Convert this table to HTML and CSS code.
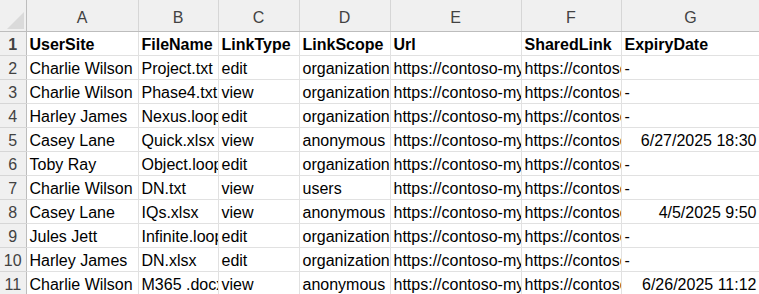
FILE: index.html
```html
<!DOCTYPE html>
<html lang="en">
<head>
    <meta charset="UTF-8">
    <title>SharedLinks.xlsx</title>
    <link rel="stylesheet" href="styles.css">
</head>
<body>
    <table class="sheet">
        <colgroup>
            <col class="c-num">
            <col class="c-a">
            <col class="c-b">
            <col class="c-c">
            <col class="c-d">
            <col class="c-e">
            <col class="c-f">
            <col class="c-g">
        </colgroup>
        <thead>
            <tr>
                <th class="corner"><span class="tri"></span></th>
                <th>A</th>
                <th>B</th>
                <th>C</th>
                <th>D</th>
                <th>E</th>
                <th>F</th>
                <th>G</th>
            </tr>
        </thead>
        <tbody>
            <tr class="head">
                <td class="num">1</td>
                <td>UserSite</td>
                <td>FileName</td>
                <td>LinkType</td>
                <td>LinkScope</td>
                <td>Url</td>
                <td>SharedLink</td>
                <td>ExpiryDate</td>
            </tr>
            <tr>
                <td class="num">2</td>
                <td>Charlie Wilson</td>
                <td>Project.txt</td>
                <td>edit</td>
                <td>organization</td>
                <td>https://contoso-my.sharepoint.com/personal/charlie</td>
                <td>https://contoso.sharepoint.com/:t:/g/personal</td>
                <td>-</td>
            </tr>
            <tr>
                <td class="num">3</td>
                <td>Charlie Wilson</td>
                <td>Phase4.txt</td>
                <td>view</td>
                <td>organization</td>
                <td>https://contoso-my.sharepoint.com/personal/charlie</td>
                <td>https://contoso.sharepoint.com/:t:/g/personal</td>
                <td>-</td>
            </tr>
            <tr>
                <td class="num">4</td>
                <td>Harley James</td>
                <td>Nexus.loop</td>
                <td>edit</td>
                <td>organization</td>
                <td>https://contoso-my.sharepoint.com/personal/harley</td>
                <td>https://contoso.sharepoint.com/:fl:/g/personal</td>
                <td>-</td>
            </tr>
            <tr>
                <td class="num">5</td>
                <td>Casey Lane</td>
                <td>Quick.xlsx</td>
                <td>view</td>
                <td>anonymous</td>
                <td>https://contoso-my.sharepoint.com/personal/casey</td>
                <td>https://contoso.sharepoint.com/:x:/g/personal</td>
                <td class="date">6/27/2025 18:30</td>
            </tr>
            <tr>
                <td class="num">6</td>
                <td>Toby Ray</td>
                <td>Object.loop</td>
                <td>edit</td>
                <td>organization</td>
                <td>https://contoso-my.sharepoint.com/personal/toby</td>
                <td>https://contoso.sharepoint.com/:fl:/g/personal</td>
                <td>-</td>
            </tr>
            <tr>
                <td class="num">7</td>
                <td>Charlie Wilson</td>
                <td>DN.txt</td>
                <td>view</td>
                <td>users</td>
                <td>https://contoso-my.sharepoint.com/personal/charlie</td>
                <td>https://contoso.sharepoint.com/:t:/g/personal</td>
                <td>-</td>
            </tr>
            <tr>
                <td class="num">8</td>
                <td>Casey Lane</td>
                <td>IQs.xlsx</td>
                <td>view</td>
                <td>anonymous</td>
                <td>https://contoso-my.sharepoint.com/personal/casey</td>
                <td>https://contoso.sharepoint.com/:x:/g/personal</td>
                <td class="date">4/5/2025 9:50</td>
            </tr>
            <tr>
                <td class="num">9</td>
                <td>Jules Jett</td>
                <td>Infinite.loop</td>
                <td>edit</td>
                <td>organization</td>
                <td>https://contoso-my.sharepoint.com/personal/jules</td>
                <td>https://contoso.sharepoint.com/:fl:/g/personal</td>
                <td>-</td>
            </tr>
            <tr>
                <td class="num">10</td>
                <td>Harley James</td>
                <td>DN.xlsx</td>
                <td>edit</td>
                <td>organization</td>
                <td>https://contoso-my.sharepoint.com/personal/harley</td>
                <td>https://contoso.sharepoint.com/:x:/g/personal</td>
                <td>-</td>
            </tr>
            <tr>
                <td class="num">11</td>
                <td>Charlie Wilson</td>
                <td>M365 .docx</td>
                <td>view</td>
                <td>anonymous</td>
                <td>https://contoso-my.sharepoint.com/personal/charlie</td>
                <td>https://contoso.sharepoint.com/:w:/g/personal</td>
                <td class="date">6/26/2025 11:12</td>
            </tr>
        </tbody>
    </table>
</body>
</html>
```

FILE: styles.css
```css
body {
    margin: 0;
    background: #ffffff;
    overflow: hidden;
    font-family: 'Liberation Sans', Arial, sans-serif;
    font-size: 16px;
    line-height: 18px;
    color: #000000;
}
.sheet {
    border-collapse: collapse;
    table-layout: fixed;
    width: 760px;
}
.c-num { width: 26px; }
.c-a { width: 112px; }
.c-b { width: 80px; }
.c-c { width: 81px; }
.c-d { width: 91px; }
.c-e { width: 131px; }
.c-f { width: 100px; }
.c-g { width: 139px; }
.sheet thead tr {
    height: 31px;
}
.sheet tbody tr {
    height: 24px;
}
.sheet th {
    padding: 0 0 4px;
    background: #f0f0f0;
    color: #424242;
    font-weight: normal;
    vertical-align: bottom;
    border-right: 1px solid #d6d6d6;
    border-bottom: 1px solid #bdbdbd;
}
.sheet th.corner {
    position: relative;
    border-right: 1px solid #bdbdbd;
}
.tri {
    position: absolute;
    right: 2px;
    bottom: 2px;
    width: 0;
    height: 0;
    border-left: 17px solid transparent;
    border-bottom: 17px solid #dadada;
}
.sheet td {
    padding: 0 2px 1px 3px;
    white-space: nowrap;
    overflow: hidden;
    text-overflow: clip;
    vertical-align: bottom;
    border-right: 1px solid #e1e1e1;
    border-bottom: 1px solid #e1e1e1;
}
.sheet td.num {
    padding: 0 0 1px;
    text-align: center;
    background: #f0f0f0;
    color: #424242;
    border-right: 1px solid #bdbdbd;
    border-bottom: 1px solid #d6d6d6;
}
.head td {
    font-weight: bold;
}
.sheet td.date {
    text-align: right;
    padding-right: 3px;
}
```
